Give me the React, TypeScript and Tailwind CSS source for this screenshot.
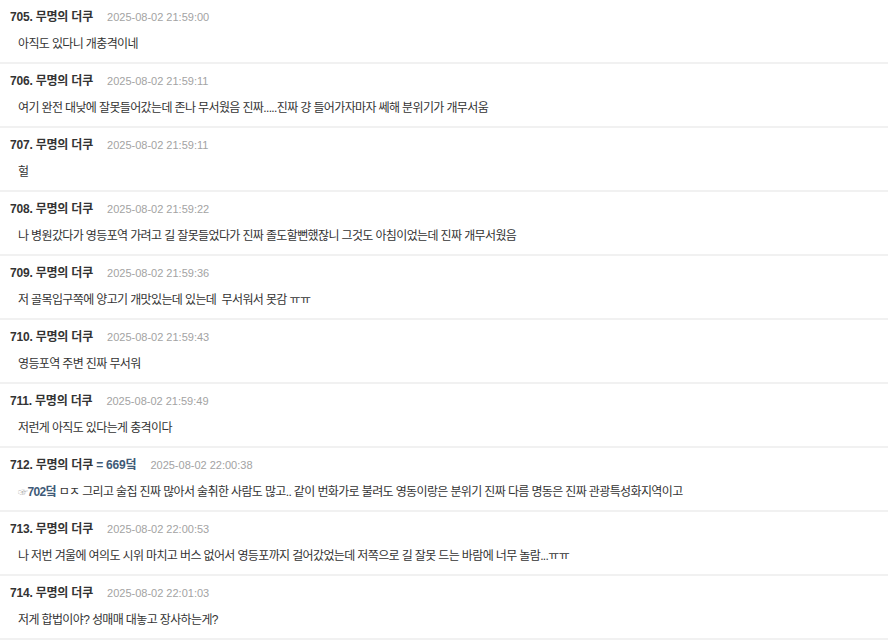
import React from "react";

type Item = { no: number; ref?: string; date: string; body: React.ReactNode };

const items: Item[] = [
  { no: 705, date: "2025-08-02 21:59:00", body: "아직도 있다니 개충격이네" },
  { no: 706, date: "2025-08-02 21:59:11", body: "여기 완전 대낮에 잘못들어갔는데 존나 무서웠음 진짜.....진짜 걍 들어가자마자 쎄해 분위기가 개무서움" },
  { no: 707, date: "2025-08-02 21:59:11", body: "헐" },
  { no: 708, date: "2025-08-02 21:59:22", body: "나 병원갔다가 영등포역 가려고 길 잘못들었다가 진짜 졸도할뻔했잖니 그것도 아침이었는데 진짜 개무서웠음" },
  { no: 709, date: "2025-08-02 21:59:36", body: "저 골목입구쪽에 양고기 개맛있는데 있는데  무서워서 못감 ㅠㅠ" },
  { no: 710, date: "2025-08-02 21:59:43", body: "영등포역 주변 진짜 무서워" },
  { no: 711, date: "2025-08-02 21:59:49", body: "저런게 아직도 있다는게 충격이다" },
  {
    no: 712,
    ref: "= 669덬",
    date: "2025-08-02 22:00:38",
    body: (
      <>
        <span className="text-[10px] text-[#b0b0b0]">☞</span>
        <span className="font-bold text-[#3f5b78]">702덬</span> ㅁㅈ 그리고 술집 진짜 많아서 술취한 사람도 많고.. 같이 번화가로 불려도 영동이랑은 분위기 진짜 다름 명동은 진짜 관광특성화지역이고
      </>
    ),
  },
  { no: 713, date: "2025-08-02 22:00:53", body: "나 저번 겨울에 여의도 시위 마치고 버스 없어서 영등포까지 걸어갔었는데 저쪽으로 길 잘못 드는 바람에 너무 놀람...ㅠㅠ" },
  { no: 714, date: "2025-08-02 22:01:03", body: "저게 합법이야? 성매매 대놓고 장사하는게?" },
];

export default function App() {
  return (
    <div
      className="w-[895px] h-[640px] overflow-hidden bg-white"
      style={{ fontFamily: '"Liberation Sans", "Noto Sans CJK KR", sans-serif' }}
    >
      <div className="w-[888px]">
        {items.map((it) => (
          <div key={it.no} className="h-[64px] border-b-2 border-[#f1f1f1] pt-[9px]">
            <div className="flex items-center h-[16px] pl-[10px]">
              <span className="text-[12px] font-bold text-[#333] tracking-[-0.2px]">
                {it.no}. 무명의 더쿠
                {it.ref && <span className="text-[#3f5b78]"> {it.ref}</span>}
              </span>
              <span className="ml-[14px] text-[11px] text-[#a3a3a3]">{it.date}</span>
            </div>
            <div className="mt-[11px] h-[16px] pl-[18px] text-[12px] leading-[16px] text-[#333] whitespace-pre tracking-[-0.63px]">
              {it.body}
            </div>
          </div>
        ))}
      </div>
    </div>
  );
}
